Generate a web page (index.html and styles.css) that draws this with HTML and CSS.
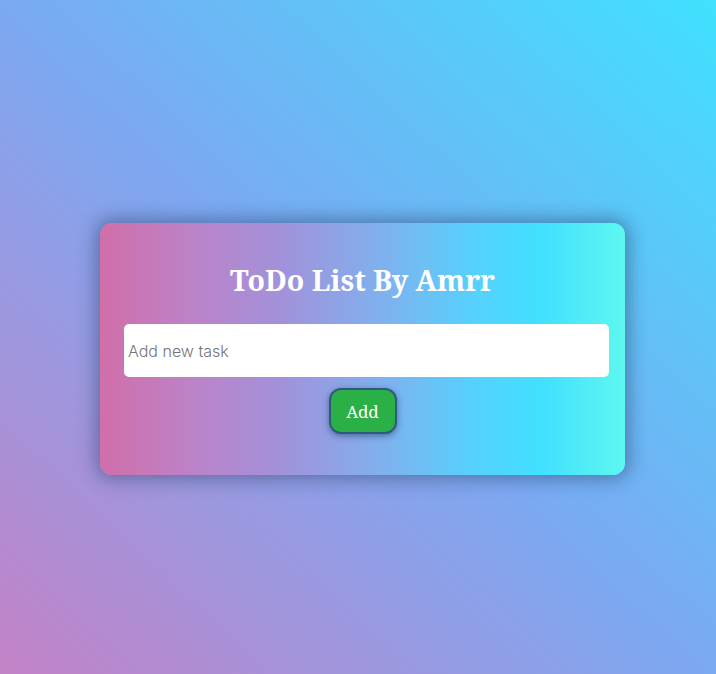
FILE: index.html
```html
<!DOCTYPE html>
<html lang="en">
<head>
<meta charset="utf-8">
<title>ToDo List</title>
<link rel="stylesheet" href="styles.css">
</head>
<body>
  <main class="page">
    <section class="card">
      <h1 class="title">ToDo List By Amrr</h1>
      <input class="task-input" type="text" placeholder="Add new task">
      <button class="add-btn" type="button">Add</button>
    </section>
  </main>
</body>
</html>
```

FILE: styles.css
```css
html, body {
  margin: 0;
  padding: 0;
  height: 100%;
}

body {
  background: linear-gradient(to top right, #c482c7 0%, #7ba9f2 50%, #40e1fe 100%);
}

.page {
  min-height: 100%;
  box-sizing: border-box;
  display: flex;
  align-items: center;
  justify-content: center;
  padding: 24px 0 0 9px;
}

.card {
  width: 525px;
  height: 252px;
  box-sizing: border-box;
  padding: 35px 24px 0 24px;
  border-radius: 12px;
  background: linear-gradient(to right, #d16ea9 0%, #bb83c8 18%, #a192db 35%, #7db3ef 55%, #58cffc 70%, #41e0fe 84%, #5ef7f0 100%);
  box-shadow: 0 0 18px 4px rgba(30, 50, 90, 0.45);
  display: flex;
  flex-direction: column;
  align-items: center;
}

.title {
  margin: 0 0 22px 0;
  font-family: "Noto Serif", "DejaVu Serif", "Liberation Serif", serif;
  font-weight: bold;
  font-size: 28.5px;
  line-height: 44px;
  color: #ffffff;
  text-align: center;
}

.task-input {
  align-self: flex-start;
  width: 100%;
  box-sizing: content-box;
  height: 53px;
  padding: 0 4px;
  margin: 0;
  border: none;
  border-radius: 5px;
  background: #ffffff;
  font-family: Inter, "Noto Sans", sans-serif;
  font-weight: 300;
  font-size: 16px;
  color: #333;
  outline: none;
}

.task-input::placeholder {
  color: #757575;
}

.add-btn {
  margin-top: 11px;
  width: 68px;
  height: 46px;
  box-sizing: border-box;
  border: 2px solid #2d5b7e;
  border-radius: 12px;
  background: #2ab047;
  color: #ffffff;
  font-family: "Noto Serif", "DejaVu Serif", "Liberation Serif", serif;
  font-size: 17px;
  box-shadow: 0 2px 6px rgba(20, 40, 80, 0.5);
  cursor: pointer;
}
```
